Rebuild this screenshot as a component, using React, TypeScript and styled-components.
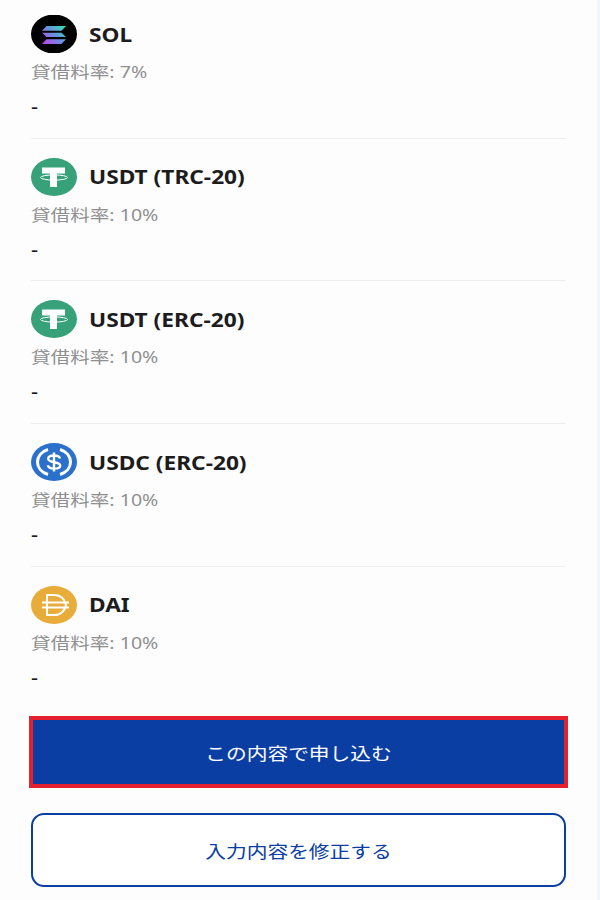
import { FC } from 'react';
import styled, { createGlobalStyle } from 'styled-components';

const COLOR_NAVY = '#0a3ea3';
const COLOR_RED = '#e3202e';

const GlobalStyle = createGlobalStyle`
  html, body {
    margin: 0;
    padding: 0;
    background: #fdfdfd;
  }
  body {
    font-family: 'Noto Sans', 'Noto Sans CJK JP', sans-serif;
  }
`;

const StyledPage = styled.div`
  width: 600px;
  height: 900px;
  overflow: hidden;
  box-sizing: border-box;
  padding: 15px 31px 0 31px;
  border-right: 3px solid #eff6fc;
`;

const StyledCoinRow = styled.div`
  height: 122.7px;
  margin-bottom: 19px;
  border-bottom: 1px solid #eeeeee;

  &:last-child {
    border-bottom: none;
    margin-bottom: 0;
  }
`;

const StyledCoinHeader = styled.div`
  display: flex;
  align-items: center;
  gap: 12px;
  height: 38px;
`;

const StyledCoinIcon = styled.svg`
  width: 46px;
  height: 38px;
  flex-shrink: 0;
`;

// the screenshot is stretched sideways, so the text gets the same stretch
const StyledCoinName = styled.div`
  font-size: 20px;
  font-weight: 700;
  color: #1c1c1e;
  transform: scaleX(1.135);
  transform-origin: left center;
`;

const StyledStretched = styled.span`
  display: inline-block;
  transform: scaleX(1.21);
  transform-origin: left center;
`;

const StyledRate = styled.div`
  margin-top: 7px;
  font-size: 16.2px;
  line-height: 24px;
  color: #8f8f8f;
`;

const StyledAmount = styled.div`
  margin-top: 10px;
  font-size: 18px;
  line-height: 24px;
  font-weight: 500;
  color: #1c1c1e;
`;

const StyledActions = styled.div`
  display: flex;
  flex-direction: column;
  gap: 25px;
  margin-top: 7.7px;
`;

const StyledButtonLabel = styled.span`
  display: inline-block;
  transform: scaleX(1.22);
`;

const StyledSubmitButton = styled.button`
  display: block;
  height: 72px;
  margin: 0 -2px;
  box-sizing: border-box;
  border: 4px solid ${COLOR_RED};
  border-radius: 0;
  background: ${COLOR_NAVY};
  color: #ffffff;
  font-family: inherit;
  font-size: 17px;
`;

const StyledEditButton = styled.button`
  display: block;
  height: 74px;
  box-sizing: border-box;
  border: 2.5px solid ${COLOR_NAVY};
  border-radius: 13px;
  background: #ffffff;
  color: ${COLOR_NAVY};
  font-family: inherit;
  font-size: 17px;
`;

const SolIcon: FC = () => (
  <StyledCoinIcon viewBox='0 0 46 38'>
    <defs>
      <linearGradient id='solGradient' gradientUnits='userSpaceOnUse' x1='13' y1='30' x2='33' y2='10'>
        <stop offset='0' stopColor='#c83ff0' />
        <stop offset='0.5' stopColor='#6c8ce0' />
        <stop offset='1' stopColor='#2fe8ae' />
      </linearGradient>
    </defs>
    <ellipse cx='23' cy='19' rx='23' ry='19.5' fill='#000' />
    <path d='M15.500 11H35l-4.500 4.700H11zM11 17.700h19.500l4.500 4.300H15.500zM15.500 24.300H35L30.500 29H11z' fill='url(#solGradient)' />
  </StyledCoinIcon>
);

const TetherIcon: FC = () => (
  <StyledCoinIcon viewBox='0 0 46 38'>
    <ellipse cx='23' cy='19' rx='23' ry='19' fill='#37a27a' />
    <path d='M11 9.500h23v6h-8v13.500h-7V15.500h-8z' fill='#fff' />
    <ellipse cx='23' cy='19.500' rx='13.500' ry='2.600' fill='none' stroke='#fff' strokeWidth='1' />
  </StyledCoinIcon>
);

const UsdcIcon: FC = () => (
  <StyledCoinIcon viewBox='0 0 46 38'>
    <ellipse cx='23' cy='19' rx='23' ry='19' fill='#2b71cc' />
    <path d='M17 6.500C10.500 8.500 6.500 13.500 6.500 19s4 10.500 10.500 12.500' fill='none' stroke='#fff' strokeWidth='3' />
    <path d='M29 6.500C35.500 8.500 39.500 13.500 39.500 19S35.500 29.500 29 31.500' fill='none' stroke='#fff' strokeWidth='3' />
    <path
      d='M29 15.500c-.5-2-2.800-3-6-3-3.500 0-5.800 1.300-5.800 3.300 0 4.700 12 2.200 12 6.600 0 2-2.600 3.200-6.200 3.200-3.300 0-5.700-1.100-6.300-3.300M23 9.500v19'
      fill='none'
      stroke='#fff'
      strokeWidth='2.400'
    />
  </StyledCoinIcon>
);

const DaiIcon: FC = () => (
  <StyledCoinIcon viewBox='0 0 46 38'>
    <ellipse cx='23' cy='19' rx='23' ry='19' fill='#e8ac3a' />
    <path
      d='M16 9h7.500c6 0 10.500 4.200 11.500 10-1 5.800-5.500 10-11.500 10H16zM11 16.500h27M11 21.500h27'
      fill='none'
      stroke='#fff'
      strokeWidth='2'
    />
  </StyledCoinIcon>
);

const COINS = [
  { name: 'SOL', rate: '7%', Icon: SolIcon },
  { name: 'USDT (TRC-20)', rate: '10%', Icon: TetherIcon },
  { name: 'USDT (ERC-20)', rate: '10%', Icon: TetherIcon },
  { name: 'USDC (ERC-20)', rate: '10%', Icon: UsdcIcon },
  { name: 'DAI', rate: '10%', Icon: DaiIcon },
];

const App: FC = () => {
  return (
    <StyledPage>
      <GlobalStyle />
      <div>
        {COINS.map(({ name, rate, Icon }) => (
          <StyledCoinRow key={name}>
            <StyledCoinHeader>
              <Icon />
              <StyledCoinName>{name}</StyledCoinName>
            </StyledCoinHeader>
            <StyledRate>
              <StyledStretched>貸借料率: {rate}</StyledStretched>
            </StyledRate>
            <StyledAmount>
              <StyledStretched>-</StyledStretched>
            </StyledAmount>
          </StyledCoinRow>
        ))}
      </div>
      <StyledActions>
        <StyledSubmitButton>
          <StyledButtonLabel>この内容で申し込む</StyledButtonLabel>
        </StyledSubmitButton>
        <StyledEditButton>
          <StyledButtonLabel>入力内容を修正する</StyledButtonLabel>
        </StyledEditButton>
      </StyledActions>
    </StyledPage>
  );
};

export default App;
